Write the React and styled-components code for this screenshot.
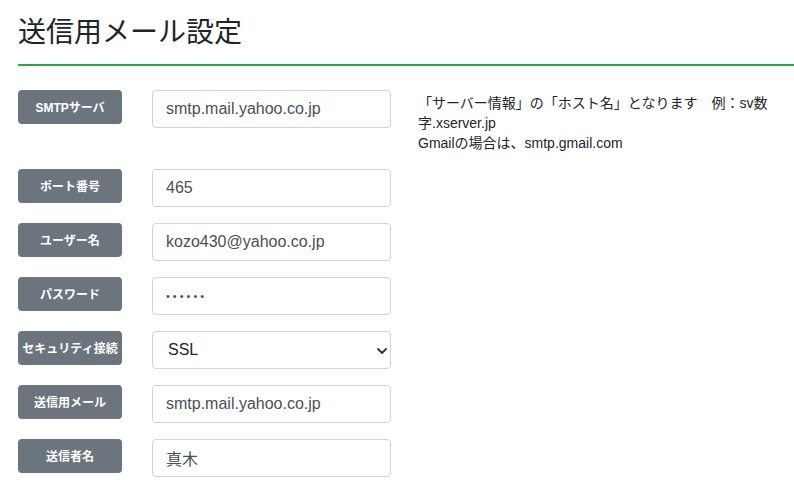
import React from "react";
import styled, { createGlobalStyle } from "styled-components";

const GlobalStyle = createGlobalStyle`
  html, body { margin: 0; padding: 0; background: #fff; }
  body {
    font-family: "Liberation Sans", "Noto Sans CJK JP", sans-serif;
    color: #212529;
    overflow: hidden;
  }
`;

const Page = styled.div`
  padding: 16px 18px 0;
  width: 794px;
  box-sizing: border-box;
`;

const Title = styled.h3`
  margin: 0 -18px 0 0;
  font-size: 28px;
  font-weight: 400;
  line-height: 1.2;
  padding-bottom: 14px;
  border-bottom: 2px solid #28a745;
  color: #212529;
`;

const Form = styled.div`
  margin-top: 24px;
  display: grid;
  grid-template-columns: 104px 239px 1fr;
  column-gap: 30px;
  row-gap: 16px;
  align-items: start;
`;

const Row = styled.div`
  display: contents;
`;

const Label = styled.div`
  height: 34px;
  display: flex;
  align-items: center;
  justify-content: center;
  background: #6c757d;
  color: #fff;
  border-radius: 4px;
  font-size: 12px;
  font-weight: 700;
  white-space: nowrap;
`;

const Field = styled.input`
  box-sizing: border-box;
  width: 239px;
  height: 38px;
  padding: 6px 12px 6px 13px;
  border: 1px solid #ced4da;
  border-radius: 4px;
  font-family: "Liberation Sans", "Noto Sans CJK JP", sans-serif;
  font-size: ${(p) => (p.type === "password" ? "11px" : "16px")};
  color: #495057;
  background: #fff;
  outline: none;
  letter-spacing: ${(p) => (p.type === "password" ? "3px" : "normal")};
`;

const SelectWrap = styled.div`
  position: relative;
  width: 239px;
  height: 38px;
`;

const Select = styled.select`
  appearance: none;
  -webkit-appearance: none;
  box-sizing: border-box;
  width: 100%;
  height: 38px;
  padding: 6px 24px 6px 15px;
  border: 1px solid #ced4da;
  border-radius: 4px;
  font-family: "Liberation Sans", "Noto Sans CJK JP", sans-serif;
  font-size: 16px;
  color: #212529;
  background: #fff;
  outline: none;
`;

const Chevron = styled.svg`
  position: absolute;
  right: 4px;
  top: 17px;
  width: 10px;
  height: 6px;
  pointer-events: none;
`;

const Help = styled.div`
  grid-column: 3;
  padding-top: 3px;
  font-size: 14px;
  line-height: 20px;
  color: #212529;
  margin-left: -3px;
`;

const Empty = styled.div``;

export default function App() {
  return (
    <>
      <GlobalStyle />
      <Page>
        <Title>送信用メール設定</Title>
        <Form>
          <Row>
            <Label>SMTPサーバ</Label>
            <Field defaultValue="smtp.mail.yahoo.co.jp" />
            <Help>
              「サーバー情報」の「ホスト名」となります　例：sv数字.xserver.jp
              <br />
              Gmailの場合は、smtp.gmail.com
            </Help>
          </Row>
          <Row>
            <Label>ポート番号</Label>
            <Field defaultValue="465" />
            <Empty />
          </Row>
          <Row>
            <Label>ユーザー名</Label>
            <Field defaultValue="kozo430@yahoo.co.jp" />
            <Empty />
          </Row>
          <Row>
            <Label>パスワード</Label>
            <Field type="password" defaultValue="abcdef" />
            <Empty />
          </Row>
          <Row>
            <Label>セキュリティ接続</Label>
            <SelectWrap>
              <Select defaultValue="SSL">
                <option value="SSL">SSL</option>
                <option value="TLS">TLS</option>
                <option value="none">なし</option>
              </Select>
              <Chevron viewBox="0 0 10 6">
                <path d="M1 1l4 4 4-4" fill="none" stroke="#333" strokeWidth="1.8" strokeLinecap="round" strokeLinejoin="round" />
              </Chevron>
            </SelectWrap>
            <Empty />
          </Row>
          <Row>
            <Label>送信用メール</Label>
            <Field defaultValue="smtp.mail.yahoo.co.jp" />
            <Empty />
          </Row>
          <Row>
            <Label>送信者名</Label>
            <Field defaultValue="真木" />
            <Empty />
          </Row>
        </Form>
      </Page>
    </>
  );
}
